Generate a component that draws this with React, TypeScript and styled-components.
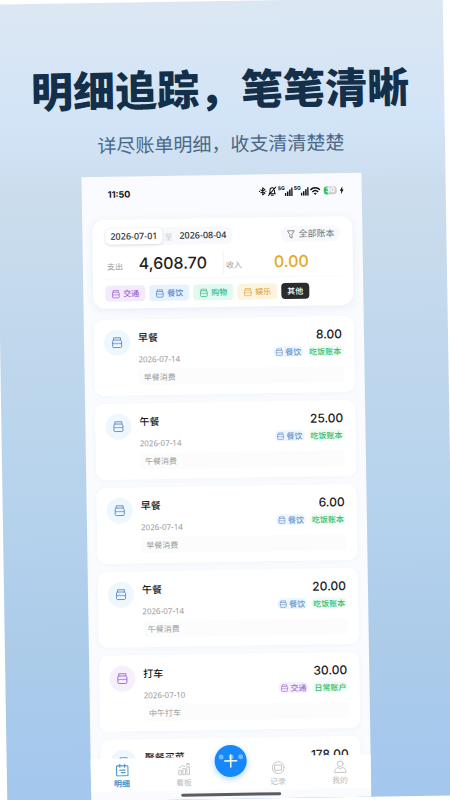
import React from "react";
import styled, { createGlobalStyle } from "styled-components";

const GlobalStyle = createGlobalStyle`
  *, *::before, *::after { box-sizing: border-box; }
  body {
    margin: 0;
    background: #fff;
    font-family: "Noto Sans", "Noto Sans CJK SC", sans-serif;
    color: #222;
  }
  h1, h2, p { margin: 0; }
  button { font: inherit; border: 0; cursor: pointer; }
`;

const Page = styled.main`
  height: 100vh;
  padding: 1px;
  overflow: hidden;
`;

const Poster = styled.section`
  height: 100%;
  padding-top: 60px;
  display: flex;
  flex-direction: column;
  align-items: center;
  overflow: hidden;
  transform: rotate(-0.9deg);
  background: linear-gradient(#dce7f3 0%, #d2e4f7 15%, #cbdded 24%, #bfd7ec 45%, #b5d2ed 65%, #abcbe9 82%, #a3c7ee 100%);
`;

const Headline = styled.h1`
  font-family: "Noto Sans CJK SC", sans-serif;
  font-size: 42px;
  line-height: 52px;
  font-weight: 900;
  color: #132f49;
  white-space: nowrap;
`;

const Tagline = styled.p`
  margin-top: 16px;
  font-family: "Noto Sans CJK SC", sans-serif;
  font-size: 19px;
  line-height: 28px;
  color: #4b6786;
  white-space: nowrap;
`;

const Phone = styled.div`
  flex: 1;
  min-height: 0;
  width: 62.5%;
  margin-top: 18px;
  display: flex;
  flex-direction: column;
  background: #f9fbfe;
`;

const StatusBar = styled.header`
  display: flex;
  align-items: center;
  justify-content: space-between;
  padding: 8px 18px 0 26px;
  height: 26px;
  flex: none;
  font-family: Inter, sans-serif;
  font-size: 9px;
  font-weight: 700;
  color: #111;
`;

const StatusIcons = styled.div`
  display: flex;
  align-items: center;
  gap: 1px;
`;

const Feed = styled.div`
  flex: 1;
  min-height: 0;
  overflow: hidden;
  padding: 17px 10px 0;
`;

const Summary = styled.section`
  padding: 8px 12px 7px;
  border-radius: 12px;
  background: #fff;
  box-shadow: 0 2px 8px rgba(70, 100, 140, 0.09);
`;

const FilterRow = styled.div`
  display: flex;
  align-items: center;
  justify-content: space-between;
`;

const DateRange = styled.div`
  display: flex;
  align-items: center;
  gap: 2px;
  padding: 1px;
  border-radius: 6px;
  background: #f8f9fc;
  color: #c8ccd2;
  font-size: 8px;
`;

const DateButton = styled.button<{ $active?: boolean }>`
  height: 16px;
  padding: 0 5px;
  border-radius: 5px;
  font-size: 9px;
  line-height: 16px;
  font-weight: 500;
  color: #2b2d31;
  background: ${(p) => (p.$active ? "#fff" : "transparent")};
  box-shadow: ${(p) => (p.$active ? "0 1px 3px rgba(40, 60, 90, 0.16)" : "none")};
`;

const BookFilter = styled.button`
  display: flex;
  align-items: center;
  gap: 3px;
  height: 16px;
  padding: 0 6px;
  border-radius: 8px;
  font-size: 9px;
  line-height: 16px;
  color: #74777d;
  background: #f8f9fc;
`;

const Totals = styled.dl`
  display: grid;
  grid-template-columns: 1fr 1fr;
  align-items: center;
  height: 34px;
  margin: 0 0 6px;
  padding-top: 2px;
  border-bottom: 1px solid #fafafb;
`;

const Total = styled.div`
  display: flex;
  align-items: center;
  padding-left: 2px;
  & + & { border-left: 1px solid #f3f4f6; }
`;

const TotalLabel = styled.dt`
  padding-top: 6px;
  font-size: 8px;
  line-height: 12px;
  color: #9a9da2;
`;

const TotalValue = styled.dd<{ $color: string }>`
  flex: 1;
  margin: 0;
  text-align: center;
  font-family: Inter, sans-serif;
  font-size: 16px;
  line-height: 24px;
  font-weight: 500;
  color: ${(p) => p.$color};
`;

const Chips = styled.div`
  display: flex;
  gap: 4px;
`;

const Chip = styled.button<{ $fg: string; $bg: string }>`
  display: flex;
  align-items: center;
  gap: 3px;
  height: 16px;
  padding: 0 6px;
  border-radius: 4px;
  font-size: 8px;
  line-height: 16px;
  font-weight: 500;
  white-space: nowrap;
  color: ${(p) => p.$fg};
  background: ${(p) => p.$bg};
`;

const Records = styled.ul`
  list-style: none;
  margin: 11px 0 0;
  padding: 0;
  display: grid;
  gap: 8px;
`;

const Record = styled.li`
  display: grid;
  grid-template-columns: 26px 1fr auto;
  column-gap: 8px;
  padding: 10px 11px 10px 10px;
  border-radius: 9px;
  background: #fff;
  box-shadow: 0 1px 5px rgba(70, 100, 140, 0.04);
`;

const Avatar = styled.span<{ $fg: string; $bg: string }>`
  display: flex;
  align-items: center;
  justify-content: center;
  width: 26px;
  height: 26px;
  border-radius: 50%;
  color: ${(p) => p.$fg};
  background: ${(p) => p.$bg};
`;

const RecordText = styled.div`
  display: flex;
  flex-direction: column;
`;

const RecordTitle = styled.h2`
  font-size: 10px;
  line-height: 16px;
  font-weight: 500;
  color: #1c1c1e;
`;

const RecordDate = styled.time`
  margin-top: 8px;
  font-size: 8px;
  line-height: 12px;
  color: #96989d;
`;

const Side = styled.div`
  display: flex;
  flex-direction: column;
  align-items: flex-end;
  gap: 4px;
`;

const Amount = styled.span`
  padding-right: 1px;
  font-family: Inter, sans-serif;
  font-size: 12px;
  line-height: 15px;
  font-weight: 500;
  color: #1c1c1e;
`;

const Tags = styled.div`
  display: flex;
  gap: 4px;
`;

const Tag = styled.span<{ $fg: string; $bg: string }>`
  display: flex;
  align-items: center;
  gap: 2px;
  height: 11px;
  padding: 0 2px;
  border-radius: 5px;
  font-size: 8px;
  line-height: 11px;
  font-weight: 500;
  color: ${(p) => p.$fg};
  background: ${(p) => p.$bg};
`;

const Note = styled.p`
  grid-column: 2 / -1;
  margin-top: 4px;
  padding: 0 5px;
  border-radius: 3px;
  font-size: 8px;
  line-height: 16px;
  color: #9a9ca0;
  background: #fcfcfd;
`;

const TabBar = styled.nav`
  flex: none;
  display: grid;
  grid-template-columns: 1fr 1fr 32px 1fr 1fr;
  height: 33px;
  background: #fff;
`;

const Tab = styled.a<{ $active?: boolean }>`
  display: flex;
  flex-direction: column;
  align-items: center;
  padding-top: 5px;
  font-size: 8px;
  line-height: 13px;
  text-decoration: none;
  font-weight: ${(p) => (p.$active ? 600 : 400)};
  color: ${(p) => (p.$active ? "#3f92c8" : "#bcbdbf")};
`;

const AddButton = styled.button`
  width: 32px;
  height: 32px;
  margin-top: -12px;
  padding: 0;
  border-radius: 50%;
  background: #1688fb;
  box-shadow: 0 2px 6px rgba(22, 136, 251, 0.35);
  svg { display: block; }
`;

const HomeArea = styled.footer`
  flex: none;
  display: flex;
  justify-content: center;
  height: 9px;
  padding-top: 3px;
`;

const HomeBar = styled.span`
  width: 36%;
  height: 3px;
  border-radius: 2px;
  background: #5c5c5e;
`;

const ShopIcon = ({ size }: { size: number }) => (
  <svg width={size} height={size} viewBox="0 0 16 16" fill="none" stroke="currentColor" strokeWidth="1.3" strokeLinejoin="round" strokeLinecap="round" aria-hidden="true">
    <path d="M3.300 4.500V1.500h9.400v3M3.300 4.500h9.400l1.300 2v6.500c0 1-.5 1.500-1.500 1.500h-9c-1 0-1.500-.5-1.500-1.500V6.500z" />
    <path d="M2 8.500c1.200 1.300 2.800 1.300 4 0 1.200 1.300 2.800 1.300 4 0 1.200 1.300 2.800 1.300 4 0" />
  </svg>
);

const FunnelIcon = () => (
  <svg width="9" height="9" viewBox="0 0 16 16" fill="none" stroke="currentColor" strokeWidth="1.4" strokeLinejoin="round" aria-hidden="true">
    <path d="M2 1.500h12L10 8v6.500L6 12.500V8z" />
  </svg>
);

const BluetoothIcon = () => (
  <svg width="8" height="10" viewBox="0 0 18 20" fill="none" stroke="currentColor" strokeWidth="2.400" strokeLinejoin="round">
    <path d="m4 6 10 8-5 4V2l5 4-10 8" />
    <circle cx="1.800" cy="10" r="1.500" fill="currentColor" stroke="none" />
    <circle cx="16.200" cy="10" r="1.500" fill="currentColor" stroke="none" />
  </svg>
);

const MutedBellIcon = () => (
  <svg width="9" height="10" viewBox="0 0 18 20" fill="none" stroke="currentColor" strokeWidth="2" strokeLinecap="round" strokeLinejoin="round">
    <path d="M3 15h12l-1.500-3V8c0-3-2-5-4.500-5S4.500 5 4.500 8v4zM7 18h4M16.500 1.500l-15 17" />
  </svg>
);

const Cell = styled.span`
  display: flex;
  align-items: flex-start;
  width: 15px;
  height: 10px;
  font-size: 5px;
  line-height: 5px;
  svg { flex: none; }
`;

const SignalIcon = () => (
  <Cell>
    5G
    <svg width="8" height="10" viewBox="0 0 8 10" fill="currentColor">
      <path d="M0 7h1.500v3H0zM2.200 5.500h1.500V10H2.200zM4.400 3.500h1.500V10H4.400zM6.500 1.500H8V10H6.500z" />
    </svg>
  </Cell>
);

const WifiIcon = () => (
  <svg width="11" height="9" viewBox="0 0 22 18" fill="none" stroke="currentColor" strokeWidth="3">
    <path d="M1.500 6.500c5.500-5.300 13.500-5.300 19 0M5.200 10.700c3.500-3.200 8.100-3.200 11.600 0" />
    <path d="m11 17-3-3.500c1.800-1.500 4.200-1.500 6 0z" fill="currentColor" stroke="none" />
  </svg>
);

const Battery = styled.span`
  display: flex;
  align-items: center;
  justify-content: center;
  width: 13px;
  height: 8px;
  margin: 0 2px;
  border-radius: 3px;
  font-size: 7px;
  line-height: 8px;
  color: #fff;
  background: linear-gradient(90deg, #35c759 33%, #c9cbcd 33%);
`;

const BoltIcon = () => (
  <svg width="4" height="8" viewBox="0 0 8 16" fill="currentColor">
    <path d="M5.500 0 0 9h3l-.8 7L8 6.500H5z" />
  </svg>
);

const tabIconProps = {
  width: 13,
  height: 13,
  viewBox: "0 0 24 24",
  fill: "none",
  stroke: "currentColor",
  strokeWidth: 1.6,
  strokeLinecap: "round" as const,
  strokeLinejoin: "round" as const,
  "aria-hidden": true,
};

const DetailIcon = () => (
  <svg {...tabIconProps} strokeWidth={2}>
    <rect x="1.500" y="4" width="21" height="18.500" rx="1.500" />
    <path d="M7.500 1v5.500M16.500 1v5.500M7 12h10M10 16.500h7" />
  </svg>
);

const BoardIcon = () => (
  <svg {...tabIconProps}>
    <path d="M2.500 14h4v8.500h-4zM10 11h4v11.500h-4zM17.500 8h4v14.500h-4zM2.500 9.500l6-4.500 4 2 8-5.500M17 1.500h4v3.500" />
  </svg>
);

const RecordIcon = () => (
  <svg {...tabIconProps}>
    <circle cx="12" cy="12" r="11" />
    <path d="M6 7h12v9.500h-8.500L7.500 18.500v-2H6z" />
  </svg>
);

const MineIcon = () => (
  <svg {...tabIconProps}>
    <circle cx="12" cy="6.500" r="5.200" />
    <path d="M8 13.500c-4.500.8-6.500 3.500-6.500 9h21c0-5.500-2-8.200-6.500-9L12 16z" />
  </svg>
);

type Tone = { fg: string; bg: string };
const blue: Tone = { fg: "#6391cb", bg: "#eef6fe" };
const purple: Tone = { fg: "#a070cf", bg: "#f6effc" };

const chips = [
  { label: "交通", fg: "#9b62cf", bg: "#f3eafd", icon: true },
  { label: "餐饮", fg: "#4d86cf", bg: "#e8f1fe", icon: true },
  { label: "购物", fg: "#31b98b", bg: "#e1f9ef", icon: true },
  { label: "娱乐", fg: "#dfa94b", bg: "#fdf4df", icon: true },
  { label: "其他", fg: "#ffffff", bg: "#2b2b2d", icon: false },
];

type Entry = {
  title: string;
  amount: string;
  tone: Tone;
  date?: string;
  note?: string;
  kind?: string;
  book?: string;
};

const records: Entry[] = [
  { title: "早餐", date: "2026-07-14", note: "早餐消费", amount: "8.00", kind: "餐饮", book: "吃饭账本", tone: blue },
  { title: "午餐", date: "2026-07-14", note: "午餐消费", amount: "25.00", kind: "餐饮", book: "吃饭账本", tone: blue },
  { title: "早餐", date: "2026-07-14", note: "早餐消费", amount: "6.00", kind: "餐饮", book: "吃饭账本", tone: blue },
  { title: "午餐", date: "2026-07-14", note: "午餐消费", amount: "20.00", kind: "餐饮", book: "吃饭账本", tone: blue },
  { title: "打车", date: "2026-07-10", note: "中午打车", amount: "30.00", kind: "交通", book: "日常账户", tone: purple },
  { title: "聚餐买菜", amount: "178.00", tone: blue },
];

export default function App() {
  return (
    <Page>
      <GlobalStyle />
      <Poster>
        <Headline>明细追踪，笔笔清晰</Headline>
        <Tagline>详尽账单明细，收支清清楚楚</Tagline>
        <Phone>
          <StatusBar>
            <span>11:50</span>
            <StatusIcons>
              <BluetoothIcon />
              <MutedBellIcon />
              <SignalIcon />
              <SignalIcon />
              <WifiIcon />
              <Battery>30</Battery>
              <BoltIcon />
            </StatusIcons>
          </StatusBar>
          <Feed>
            <Summary>
              <FilterRow>
                <DateRange>
                  <DateButton $active>2026-07-01</DateButton>
                  至
                  <DateButton>2026-08-04</DateButton>
                </DateRange>
                <BookFilter>
                  <FunnelIcon />
                  全部账本
                </BookFilter>
              </FilterRow>
              <Totals>
                <Total>
                  <TotalLabel>支出</TotalLabel>
                  <TotalValue $color="#1f1f21">4,608.70</TotalValue>
                </Total>
                <Total>
                  <TotalLabel>收入</TotalLabel>
                  <TotalValue $color="#e3aa25">0.00</TotalValue>
                </Total>
              </Totals>
              <Chips>
                {chips.map((c) => (
                  <Chip key={c.label} $fg={c.fg} $bg={c.bg}>
                    {c.icon && <ShopIcon size={9} />}
                    {c.label}
                  </Chip>
                ))}
              </Chips>
            </Summary>
            <Records>
              {records.map((r, i) => (
                <Record key={i}>
                  <Avatar $fg={r.tone.fg} $bg={r.tone.bg}>
                    <ShopIcon size={12} />
                  </Avatar>
                  <RecordText>
                    <RecordTitle>{r.title}</RecordTitle>
                    {r.date && <RecordDate>{r.date}</RecordDate>}
                  </RecordText>
                  <Side>
                    <Amount>{r.amount}</Amount>
                    {r.kind && (
                      <Tags>
                        <Tag $fg={r.tone.fg} $bg={r.tone.bg}>
                          <ShopIcon size={8} />
                          {r.kind}
                        </Tag>
                        <Tag $fg="#35bb72" $bg="#effbf3">{r.book}</Tag>
                      </Tags>
                    )}
                  </Side>
                  {r.note && <Note>{r.note}</Note>}
                </Record>
              ))}
            </Records>
          </Feed>
          <TabBar>
            <Tab href="#detail" $active>
              <DetailIcon />
              明细
            </Tab>
            <Tab href="#board">
              <BoardIcon />
              看板
            </Tab>
            <AddButton aria-label="添加">
              <svg width="32" height="32" viewBox="0 0 32 32" fill="none">
                <g fill="#fff" fillOpacity="0.400">
                  <circle cx="6.500" cy="12" r="2.500" />
                  <circle cx="16.500" cy="12" r="2.500" />
                  <circle cx="26" cy="12" r="2.500" />
                </g>
                <path d="M16 10v12M10 16h12" stroke="#fff" strokeWidth="1.500" strokeLinecap="round" />
              </svg>
            </AddButton>
            <Tab href="#records">
              <RecordIcon />
              记录
            </Tab>
            <Tab href="#mine">
              <MineIcon />
              我的
            </Tab>
          </TabBar>
          <HomeArea>
            <HomeBar />
          </HomeArea>
        </Phone>
      </Poster>
    </Page>
  );
}
